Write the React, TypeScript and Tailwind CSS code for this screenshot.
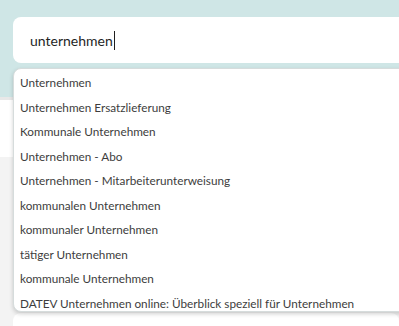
import React from 'react';

const suggestions = [
  'Unternehmen',
  'Unternehmen Ersatzlieferung',
  'Kommunale Unternehmen',
  'Unternehmen - Abo',
  'Unternehmen - Mitarbeiterunterweisung',
  'kommunalen Unternehmen',
  'kommunaler Unternehmen',
  'tätiger Unternehmen',
  'kommunale Unternehmen',
  'DATEV Unternehmen online: Überblick speziell für Unternehmen',
];

const App: React.FC = () => {
  return (
    <div
      className="relative w-[399px] h-[326px] overflow-hidden bg-[#f3f3f3]"
      style={{ fontFamily: 'Lato, "Open Sans", sans-serif' }}
    >
      {/* Search header */}
      <div className="bg-[#cfe6e6] h-[97px] pt-[17px] pl-[13px]">
        <div className="w-[420px] h-[46px] bg-white rounded-lg flex items-center pl-[17px]">
          <span className="text-[14px] text-[#1f1f1f]">unternehmen</span>
          <span className="w-px h-[19px] bg-[#1f1f1f] ml-px" />
        </div>
      </div>
      <div className="h-[3px] bg-[#e8e8e8]" />
      <div className="h-[57px] bg-white" />
      <div className="h-[156px]" />
      <div className="ml-[13px] h-[20px] bg-white rounded-lg" />

      {/* Autocomplete dropdown */}
      <div className="absolute left-[13px] top-[68px] w-[420px] h-[244px] bg-white rounded-lg border border-[#d6dcdc] shadow-[0_2px_4px_rgba(0,0,0,0.18)] pt-[2px]">
        {suggestions.map((s) => (
          <div key={s} className="h-[24.5px] flex items-center pl-[6px] text-[11.75px] text-[#3d3d3d]">
            {s}
          </div>
        ))}
      </div>
    </div>
  );
};

export default App;
